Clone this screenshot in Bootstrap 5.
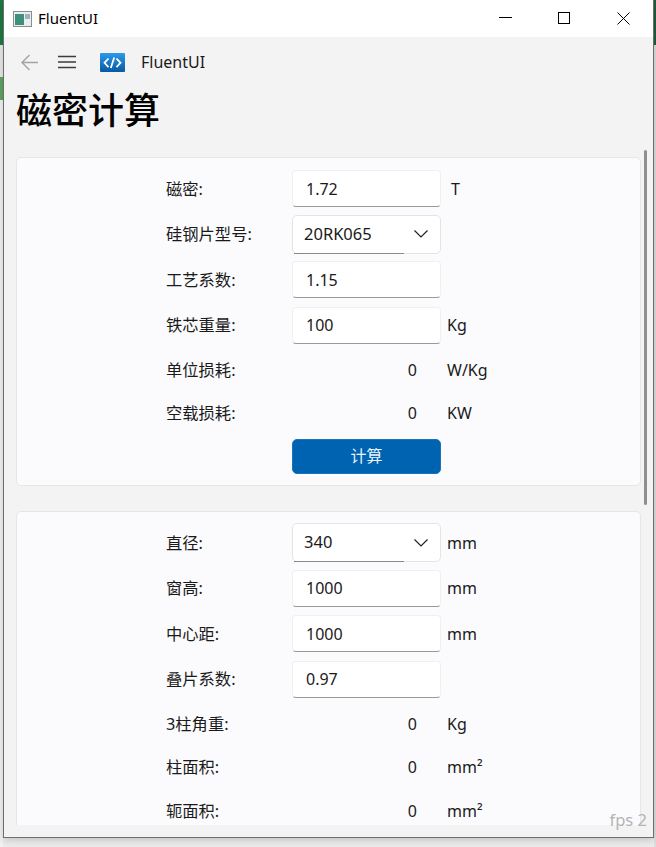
<!DOCTYPE html>
<html lang="zh-CN">
<head>
    <meta charset="UTF-8">
    <title>FluentUI</title>
    <meta name="viewport" content="width=device-width, initial-scale=1">
    <link href="https://cdn.jsdelivr.net/npm/bootstrap@5.3.0/dist/css/bootstrap.min.css" rel="stylesheet">
    <style>
        html, body {
            height: 100%;
            overflow: hidden;
        }

        body {
            background: #ececec;
            font-family: "Noto Sans", "Noto Sans CJK SC", sans-serif;
            font-size: 16px;
            color: #1a1a1a;
        }

        .desk-left {
            width: 3px;
            height: 847px;
            background: linear-gradient(to bottom, #1d7a42 0, #1d7a42 45px, #e8e8e8 45px, #e8e8e8 77px, #5da55f 77px, #5da55f 100px, #f2f2f2 100px);
        }

        .desk-right {
            width: 2px;
            height: 847px;
            background: linear-gradient(to bottom, #1f5c3c 0, #1f5c3c 45px, #dedede 45px);
        }

        .app-window {
            width: 651px;
            height: 838px;
            background: #f3f3f3;
            border: 1px solid #6e6e6e;
            border-top: 0;
            box-shadow: 0 2px 8px rgba(0, 0, 0, .18);
        }

        .title-bar {
            height: 37px;
            background: #fff;
            font-size: 15px;
            color: #000;
        }

        .app-icon {
            margin: 0 6px 0 9px;
        }

        .win-btn {
            width: 59px;
            height: 37px;
        }

        .nav-strip {
            height: 50px;
            padding-left: 16px;
            font-size: 16px;
        }

        .nav-icon {
            width: 20px;
            margin-right: 17px;
        }

        .brand-icon {
            margin: 0 16px 0 6px;
        }

        .page-title {
            font-family: "Noto Sans CJK SC", sans-serif;
            font-size: 36px;
            font-weight: 500;
            line-height: 46px;
            color: #000;
            margin: -2px 0 4px 12px;
        }

        .scroll-area {
            height: 690px;
            padding: 22px 12px 0 12px;
        }

        .scroll-thumb {
            position: absolute;
            top: 150px;
            right: 6px;
            width: 3px;
            height: 355px;
            border-radius: 2px;
            background: #8f8f8f;
        }

        .fps-text {
            position: absolute;
            right: 6px;
            bottom: 4px;
            font-size: 16.5px;
            color: #b4b4b4;
        }

        .calc-panel {
            background: #fbfbfd;
            border: 1px solid #e6e6e6;
            border-radius: 5px;
            padding: 8px 0 0 149px;
            margin-bottom: 25px;
        }

        .calc-first {
            height: 329px;
        }

        .calc-second {
            height: 340px;
            margin-bottom: 0;
        }

        .calc-row {
            height: 45.5px;
        }

        .calc-row-text {
            height: 43.5px;
        }

        .calc-row-btn {
            height: 42px;
        }

        .calc-label {
            width: 126px;
            font-size: 16.3px;
        }

        .calc-input.form-control {
            width: 149px;
            height: 37px;
            padding: 0 13px;
            font-size: 16px;
            color: #1a1a1a;
            background: #fff;
            border: 1px solid #f0f0f0;
            border-bottom-color: #9a9a9a;
            border-radius: 4px;
        }

        .calc-combo {
            position: relative;
            width: 149px;
            height: 39px;
            padding: 0 11px;
            font-size: 16.5px;
            background: #fff;
            border: 1px solid #e4e4e4;
            border-radius: 5px;
        }

        .calc-combo svg {
            margin-right: 1px;
        }

        .calc-combo::after {
            content: "";
            position: absolute;
            left: 1px;
            bottom: -1px;
            width: 110px;
            height: 1px;
            background: #8a8a8a;
        }

        .calc-value {
            width: 149px;
            padding-right: 24px;
            text-align: right;
        }

        .calc-unit {
            margin-left: 6px;
        }

        .unit-t {
            margin-left: 10px;
        }

        .calc-btn.btn {
            width: 149px;
            height: 35px;
            padding: 0;
            font-size: 16px;
            color: #eaf3fb;
            background: #0063b1;
            border: 1px solid #1a73b8;
            border-radius: 5px;
        }
    </style>
</head>
<body>
<div class="d-flex position-relative">
    <div class="desk-left"></div>
    <div class="app-window position-relative d-flex flex-column">
        <div class="title-bar d-flex align-items-center">
            <svg class="app-icon" width="19" height="16" viewBox="0 0 19 16">
                <rect x=".5" y=".5" width="18" height="15" fill="#e9eef0" stroke="#8c8c8c"/>
                <rect x="2" y="3" width="9" height="11" fill="#3f8f7c"/>
                <rect x="12" y="3" width="5" height="5" fill="#9ab4b8"/>
            </svg>
            <span>FluentUI</span>
            <div class="ms-auto d-flex">
                <div class="win-btn d-flex align-items-center justify-content-center">
                    <svg width="13" height="13" viewBox="0 0 13 13"><path d="M0 5.5h13" stroke="#000"/></svg>
                </div>
                <div class="win-btn d-flex align-items-center justify-content-center">
                    <svg width="13" height="13" viewBox="0 0 13 13"><rect x=".5" y=".5" width="11" height="11" fill="none" stroke="#000"/></svg>
                </div>
                <div class="win-btn d-flex align-items-center justify-content-center">
                    <svg width="13" height="13" viewBox="0 0 13 13"><path d="M.5.5l12 12M12.5.5l-12 12" stroke="#000"/></svg>
                </div>
            </div>
        </div>

        <div class="nav-strip d-flex align-items-center">
            <svg class="nav-icon" width="20" height="17" viewBox="0 0 20 17" fill="none" stroke="#a3a3a3" stroke-width="1.4">
                <path d="M18 8.5H2M9.5 1L2 8.5 9.5 16"/>
            </svg>
            <svg class="nav-icon" width="20" height="14" viewBox="0 0 20 14" fill="none" stroke="#3c3c3c" stroke-width="1.5">
                <path d="M1 1.5h18M1 7h18M1 12.5h18"/>
            </svg>
            <svg class="brand-icon" width="25" height="19" viewBox="0 0 25 19">
                <defs>
                    <linearGradient id="brandFill" x1="0" y1="0" x2="0" y2="1">
                        <stop offset="0" stop-color="#2a9bea"/>
                        <stop offset="1" stop-color="#0a58a2"/>
                    </linearGradient>
                </defs>
                <rect width="25" height="19" rx="1" fill="url(#brandFill)"/>
                <path d="M8.5 5.5L4.5 9.8l4 4.3M16.5 5.5l4 4.3-4 4.3M14.2 4.5l-3.4 10.6" fill="none" stroke="#fff" stroke-width="1.8"/>
            </svg>
            <span>FluentUI</span>
        </div>

        <h1 class="page-title">磁密计算</h1>

        <div class="scroll-area overflow-hidden">
            <div class="calc-panel calc-first">
                <div class="calc-row d-flex align-items-center">
                    <div class="calc-label">磁密:</div>
                    <input class="calc-input form-control" value="1.72">
                    <span class="unit-t">T</span>
                </div>
                <div class="calc-row d-flex align-items-center">
                    <div class="calc-label">硅钢片型号:</div>
                    <div class="calc-combo d-flex align-items-center justify-content-between">
                        <span>20RK065</span>
                        <svg width="14" height="8" viewBox="0 0 14 8" fill="none" stroke="#222" stroke-width="1.2"><path d="M.5.5L7 7l6.5-6.5"/></svg>
                    </div>
                </div>
                <div class="calc-row d-flex align-items-center">
                    <div class="calc-label">工艺系数:</div>
                    <input class="calc-input form-control" value="1.15">
                </div>
                <div class="calc-row d-flex align-items-center">
                    <div class="calc-label">铁芯重量:</div>
                    <input class="calc-input form-control" value="100">
                    <span class="calc-unit">Kg</span>
                </div>
                <div class="calc-row-text d-flex align-items-center">
                    <div class="calc-label">单位损耗:</div>
                    <div class="calc-value">0</div>
                    <span class="calc-unit">W/Kg</span>
                </div>
                <div class="calc-row-text d-flex align-items-center">
                    <div class="calc-label">空载损耗:</div>
                    <div class="calc-value">0</div>
                    <span class="calc-unit">KW</span>
                </div>
                <div class="calc-row-btn d-flex align-items-center">
                    <div class="calc-label"></div>
                    <button type="button" class="calc-btn btn">计算</button>
                </div>
            </div>

            <div class="calc-panel calc-second">
                <div class="calc-row d-flex align-items-center">
                    <div class="calc-label">直径:</div>
                    <div class="calc-combo d-flex align-items-center justify-content-between">
                        <span>340</span>
                        <svg width="14" height="8" viewBox="0 0 14 8" fill="none" stroke="#222" stroke-width="1.2"><path d="M.5.5L7 7l6.5-6.5"/></svg>
                    </div>
                    <span class="calc-unit">mm</span>
                </div>
                <div class="calc-row d-flex align-items-center">
                    <div class="calc-label">窗高:</div>
                    <input class="calc-input form-control" value="1000">
                    <span class="calc-unit">mm</span>
                </div>
                <div class="calc-row d-flex align-items-center">
                    <div class="calc-label">中心距:</div>
                    <input class="calc-input form-control" value="1000">
                    <span class="calc-unit">mm</span>
                </div>
                <div class="calc-row d-flex align-items-center">
                    <div class="calc-label">叠片系数:</div>
                    <input class="calc-input form-control" value="0.97">
                </div>
                <div class="calc-row-text d-flex align-items-center">
                    <div class="calc-label">3柱角重:</div>
                    <div class="calc-value">0</div>
                    <span class="calc-unit">Kg</span>
                </div>
                <div class="calc-row-text d-flex align-items-center">
                    <div class="calc-label">柱面积:</div>
                    <div class="calc-value">0</div>
                    <span class="calc-unit">mm²</span>
                </div>
                <div class="calc-row-text d-flex align-items-center">
                    <div class="calc-label">轭面积:</div>
                    <div class="calc-value">0</div>
                    <span class="calc-unit">mm²</span>
                </div>
            </div>
        </div>

        <div class="scroll-thumb"></div>
        <div class="fps-text">fps 2</div>
    </div>
    <div class="desk-right"></div>
</div>
<script src="https://cdn.jsdelivr.net/npm/bootstrap@5.3.0/dist/js/bootstrap.bundle.min.js"></script>
</body>
</html>
